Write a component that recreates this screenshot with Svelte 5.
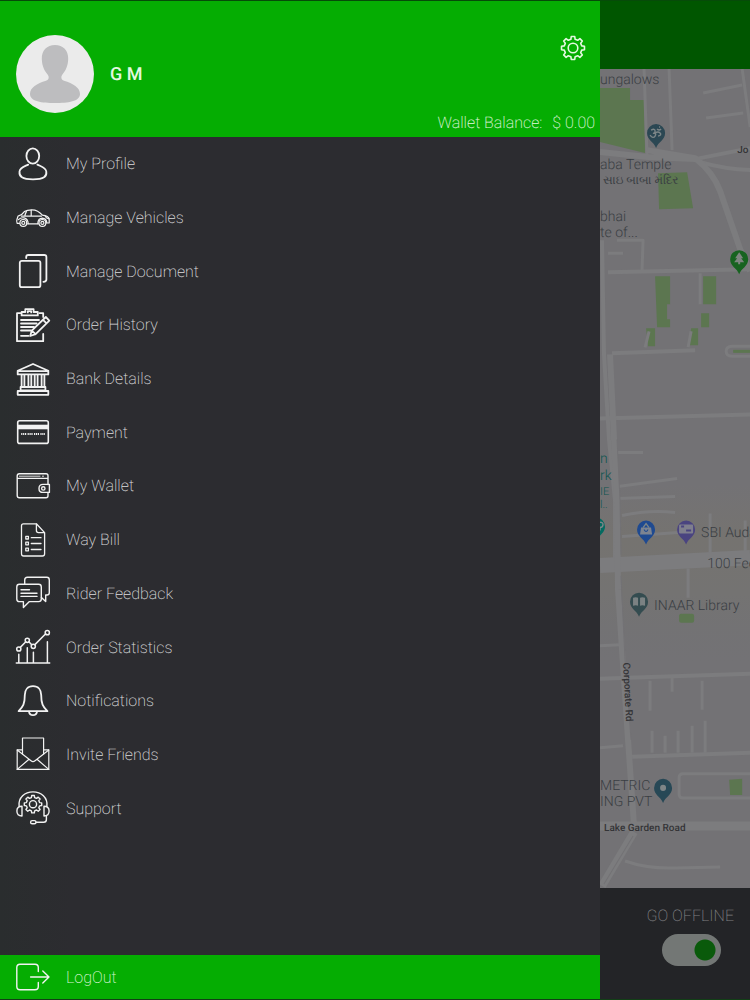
<script>
  let online = $state(true);

  const menu = [
    { id: "profile", label: "My Profile" },
    { id: "vehicles", label: "Manage Vehicles" },
    { id: "document", label: "Manage Document" },
    { id: "history", label: "Order History" },
    { id: "bank", label: "Bank Details" },
    { id: "payment", label: "Payment" },
    { id: "wallet", label: "My Wallet" },
    { id: "waybill", label: "Way Bill" },
    { id: "feedback", label: "Rider Feedback" },
    { id: "statistics", label: "Order Statistics" },
    { id: "notifications", label: "Notifications" },
    { id: "invite", label: "Invite Friends" },
    { id: "support", label: "Support" },
  ];

  const pins = [
    { x: 56, y: 64, color: "#2b4753", kind: "temple" },
    { x: 139, y: 190, color: "#176320", kind: "tree" },
    { x: -4, y: 457, color: "#046a60", kind: "park" },
    { x: 46, y: 460, color: "#1f4a90", kind: "shop" },
    { x: 86, y: 460, color: "#4a4480", kind: "bank" },
    { x: 39, y: 532, color: "#344c50", kind: "library" },
    { x: 63, y: 718, color: "#274856", kind: "place" },
  ];

  // Outline of a cog with eight teeth
  function gear(cx, cy, outer, inner) {
    const steps = [
      [-0.24, inner],
      [-0.15, outer],
      [0.15, outer],
      [0.24, inner],
    ];
    const points = [];
    for (let i = 0; i < 8; i++) {
      for (const [turn, r] of steps) {
        const a = (i * Math.PI) / 4 + turn;
        points.push(`${(cx + r * Math.cos(a)).toFixed(2)} ${(cy + r * Math.sin(a)).toFixed(2)}`);
      }
    }
    return `M${points.join("L")}Z`;
  }
</script>

{#snippet icon(id)}
  <svg class="icon" viewBox="0 0 34 34" aria-hidden="true">
    {#if id === "profile"}
      <g stroke-width="1.8">
        <ellipse cx="16.8" cy="9" rx="6.4" ry="7.6" />
        <path d="M12.2 17.6C8 19.6 4 20.4 3.5 24.5C3 29.5 6 32.3 17 32.3S31 29.5 30.3 24.5C29.8 20.4 25.5 19.6 21.4 17.6" />
      </g>
    {:else if id === "vehicles"}
      <g stroke-width="1.2">
        <path d="M3.4 22.4H1.2Q.2 20.5 1 18.2L2 15.2Q6 14.2 8.4 10.6Q11 8.8 16 8.8Q22 8.8 26.4 14.2Q32.5 15 33.2 18V22H30.6M11.4 22.8H22.4" />
        <path d="M5.5 15.2H25.4M8.8 15Q9.2 12.8 10.4 10.6M15.2 9V15M2.4 18.6Q4.6 16.4 8 16.8Q12 17.6 12.2 22.6M21.8 22.6Q22 17.4 26.4 17.2Q30.2 17.4 30.8 21.6M29.4 15.5Q30.4 17.6 33 17.8" />
        <circle cx="7.3" cy="21.9" r="3.4" />
        <circle cx="7.3" cy="21.9" r="1.5" />
        <circle cx="26.4" cy="21.9" r="3.4" />
        <circle cx="26.4" cy="21.9" r="1.5" />
      </g>
    {:else if id === "document"}
      <g stroke-width="1.8">
        <rect x="3.8" y="6.8" width="20.6" height="26.4" rx="2" />
        <path d="M10.2 4V3Q10.2 1 12.2 1H28.4Q30.4 1 30.4 3V25.4Q30.4 27.6 27.4 27.8" />
      </g>
    {:else if id === "history"}
      <g stroke-width="1.8">
        <path d="M5 5.2H1V33.2H27.2V26M23.5 5.2H27.2V9" />
        <path d="M5.6 7.4V4H9.3V1.2H17.6V4H21.8V7.4ZM11.8 4.4V3.2H15.2V4.4" />
        <path d="M5 12H23M5 15.5H20.6M5 19H18M5 22.5H15M5 27.8H12.5" />
        <path d="M14.2 28L15.8 22.6L29.8 9L33.3 12.6L19.6 26.2ZM15.8 22.6L19.6 26.2M27 11.8L30.6 15.4" />
      </g>
    {:else if id === "bank"}
      <g stroke-width="1.8">
        <path d="M1.7 8.8L17 2L32.3 8.8V12.4H1.7ZM2 9.2H32" />
        <path d="M5.6 13V24.5M8.4 13V24.5M12.4 13V24.5M15.3 13V24.5M18.7 13V24.5M21.6 13V24.5M25.6 13V24.5M28.4 13V24.5" />
        <path d="M4.6 25H29.4V28.4H4.6ZM1.7 29H32.3V32.8H1.7Z" />
      </g>
    {:else if id === "payment"}
      <g stroke-width="1.6">
        <rect x="1.7" y="5.8" width="30.6" height="22.6" rx="2" />
        <path d="M2 12H32" stroke-width="4.6" stroke-linecap="butt" />
        <path d="M5.2 19H29" stroke-width="1.8" stroke-linecap="butt" stroke-dasharray="1.2 .7 1.2 .7 1.2 1.4" />
      </g>
    {:else if id === "wallet"}
      <g stroke-width="1.4">
        <path d="M32 15.5V6.8Q32 4.8 30 4.8H3.4Q1.2 4.8 1.2 7V26.6Q1.2 28.8 3.4 28.8H30Q32 28.8 32 26.8V23.4M1.8 9.4H31.6" />
        <path d="M3.4 7.2H24M26.4 7.2H27.6" stroke-width=".9" />
        <path d="M33.4 15.4H27Q23 15.4 23 19.4T27 23.4H33.4Z" />
        <circle cx="27.3" cy="19.4" r="1.7" />
      </g>
    {:else if id === "waybill"}
      <g stroke-width="1.3">
        <path d="M20.4 .8H7.4Q5.5 .8 5.5 2.8V30.8Q5.5 33 7.6 33H26.4Q28.6 33 28.6 30.8V9.6L20.4 .8V7.6Q20.4 9.6 22.4 9.6H28.6" />
        <path d="M9.8 13.4H12.4V16H9.8ZM9.8 19.2H12.4V21.8H9.8ZM9.8 25.2H12.4V27.8H9.8Z" />
        <path d="M15.3 14.7H25M15.3 20.5H25M15.3 26.5H25" />
      </g>
    {:else if id === "feedback"}
      <g stroke-width="1.4">
        <path d="M3.4 8.3H22.6Q25.3 8.3 25.3 11V23Q25.3 25.6 22.6 25.6H13.4L7.4 31.6V25.6H3.4Q.8 25.6 .8 23V11Q.8 8.3 3.4 8.3Z" />
        <path d="M8.7 8V4Q8.7 1.3 11.4 1.3H30.8Q33.3 1.3 33.3 4V16.4Q33.3 19 30.8 19H29.7V25.6L25.4 21.4" />
        <path d="M5 13.7H13.5M5 17.2H21M5 20.4H21" />
      </g>
    {:else if id === "statistics"}
      <g stroke-width="1.5">
        <path d="M.3 33H33.7M2.8 32.5V24.3M11.3 32.5V17.7M17.4 32.5V22.3M31.4 32.5V11.7" />
        <path d="M4.3 17.4L9.8 11.8M12.9 11.8L15.7 14.8M18.9 14.6L29.7 3.8" />
        <circle cx="2.8" cy="19" r="2.1" />
        <circle cx="11.3" cy="10.3" r="2.1" />
        <circle cx="17.3" cy="16.3" r="2.1" />
        <circle cx="31.3" cy="2.7" r="2.1" />
      </g>
    {:else if id === "notifications"}
      <g stroke-width="1.8">
        <path d="M17 2.2C11.5 2.2 8.8 6 8.8 11C8.8 19.8 7.2 22.6 2.6 27.2H31.4C26.8 22.6 25.2 19.8 25.2 11C25.2 6 22.5 2.2 17 2.2Z" />
        <path d="M13 27.6Q13.5 31.2 17 31.2T21 27.6" />
      </g>
    {:else if id === "invite"}
      <g stroke-width="1.2">
        <path d="M6.5 12.8H1.2V32.4H32.8V12.8H27.6M6.5 17V1H27.6V17" />
        <path d="M1.2 13L15 23.8Q17 25.4 19 23.8L32.8 13M1.2 32.4L13 22.3M32.8 32.4L21 22.3" />
      </g>
    {:else if id === "support"}
      <g stroke-width="1.4">
        <path d="M3.1 15.4C2 6.5 9 .9 17 .9S32 6.5 30.9 15.4" />
        <path d="M6 15.2C2.4 15.2 .9 17 .9 20S2.4 25 6 25ZM28 15.2C31.6 15.2 33.1 17 33.1 20S31.6 25 28 25Z" />
        <path d="M30.4 25V28.4Q30.4 31.2 27.6 31.2H20" />
        <rect x="14.6" y="29.6" width="5.4" height="3.2" rx="1.6" />
        <path d={gear(17, 13.2, 8.8, 6.8)} />
        <circle cx="17" cy="13.2" r="3.6" />
      </g>
    {:else if id === "logout"}
      <g stroke-width="1.4">
        <path d="M22.3 11.6V7.4Q22.3 4.2 19 4.2H4Q.8 4.2 .8 7.4V26.6Q.8 29.8 4 29.8H19Q22.3 29.8 22.3 26.6V22.4" />
        <path d="M14.6 17H33M26.8 11L33 17L26.8 23" />
      </g>
    {/if}
  </svg>
{/snippet}

<div class="screen">
  <aside class="drawer">
    <header>
      <div class="account">
        <svg class="avatar" viewBox="0 0 78 78" role="img" aria-label="Profile picture">
          <circle cx="39" cy="39" r="39" fill="#ebebeb" />
          <path
            fill="#bdbdbf"
            d="M39 10C47 10 52.5 15.5 52.2 24C52 31 49.5 36 46.4 39.5C44.6 42 45.2 44.6 48 45.8C57 48.6 64 52.5 64 59C64 66.5 52 68 39 68S14 66.5 14 59C14 52.5 21 48.6 30 45.8C33 44.6 33.4 42 31.6 39.5C28.5 36 26 31 25.8 24C25.5 15.5 31 10 39 10Z"
          />
        </svg>
        <h1>G M</h1>
        <button class="settings" aria-label="Settings">
          <svg viewBox="0 0 26 26" aria-hidden="true">
            <path d={gear(13, 13, 11.6, 9)} />
            <circle cx="13" cy="13" r="4.8" />
          </svg>
        </button>
      </div>
      <p class="balance"><span>Wallet Balance:</span><span>$ 0.00</span></p>
    </header>

    <nav>
      {#each menu as item}
        <a href="#{item.id}">
          {@render icon(item.id)}
          <span>{item.label}</span>
        </a>
      {/each}
    </nav>

    <button class="logout">
      {@render icon("logout")}
      <span>LogOut</span>
    </button>
  </aside>

  <main>
    <div class="appbar"></div>
    <div class="map">
      <svg viewBox="0 0 150 818" preserveAspectRatio="xMinYMin slice" role="img" aria-label="Map">
        <defs>
          <linearGradient id="district" x1="0" y1="0" x2="0" y2="1">
            <stop offset="0" stop-color="#757370" stop-opacity="0" />
            <stop offset="0.3" stop-color="#757370" />
            <stop offset="0.6" stop-color="#747372" />
            <stop offset="1" stop-color="#727274" stop-opacity="0" />
          </linearGradient>
        </defs>
        <rect width="150" height="818" fill="#737275" />
        <rect y="415" width="150" height="180" fill="url(#district)" />

        <g fill="#5c7650">
          <path d="M0 19H30V31H44L45 84L0 73Z" />
          <path d="M58 104L87 103L93 139L59 140Z" />
          <path d="M55 207H70V235H67V250H70V258H57Z" />
          <path d="M46 259H55V277H48ZM103 207H116V235H103ZM101 244H109V258H101ZM91 259H98V276H89Z" />
          <rect x="79" y="544" width="15" height="9" rx="2" />
          <path d="M129 710L142 709V725H130Z" />
        </g>

        <g class="roads">
          <g stroke-width="3">
            <path d="M44 0L47 88M69 0L72 81M142 0L150 58M103 24L142 16M106 49L143 44" />
            <path d="M8 184H23M17 171H43L42 201M100 204V235M49 262L45 278M91 262L88 278" />
            <path d="M17 383H43M18 417L77 409M18 429L75 427M22 446Q50 440 75 443M22 467L78 463" />
            <path d="M110 444V486M145 451V486M88 499V528M0 576L20 575M0 678L23 676" />
            <path d="M50 611V641M72 608V622M102 611V640M52 661V683M65 666V683M78 661V683M92 656V683M105 651V683" />
            <path d="M150 704H83Q79 704 79 708V724Q79 728 83 728H150" />
            <path d="M150 277H132Q126 277 126 282T132 287H150M25 791Q48 799 75 798L120 797" />
          </g>
          <g stroke-width="4">
            <path d="M8 203L150 200M12 284L95 281M0 349L150 345M0 609L28 608L150 604M32 687L150 683" />
            <path d="M95 90L150 79M100 93Q125 100 150 101M2 171L4 285L9 370L15 431V490" />
          </g>
          <g stroke-width="6">
            <path d="M0 83L48 88L95 90M47 81L95 89Q113 103 120 122L140 180L150 202" />
            <path d="M0 756H150" stroke-width="9" />
            <path d="M0 496L150 488" stroke-width="15" />
            <path d="M10 285L14 370L17 431L18 520L22 580L28 670L34 756" />
            <path d="M34 762L2 816" stroke-width="8" />
          </g>
        </g>
        <path d="M17 370L20 431L21 485M21 506L25 590L31 670M33 766L4 814" fill="none" stroke="#737275" />
        <path d="M133 282H150" stroke="#5c7650" stroke-width="3" />

        <g class="places">
          <text x="0" y="15">ungalows</text>
          <text x="0" y="100">aba Temple</text>
          <text x="3" y="115" font-size="12">સાઇ બાબા મંદિર</text>
          <text x="0" y="152">bhai</text>
          <text x="0" y="168">te of...</text>
          <text x="101" y="467">SBI Auda</text>
          <text x="107" y="498">100 Fee</text>
          <text x="54" y="540">INAAR Library</text>
          <text x="0" y="720">METRIC</text>
          <text x="0" y="736">ING PVT</text>
          <g class="green">
            <text x="0" y="394">n</text>
            <text x="0" y="410">rk</text>
            <text x="0" y="425" font-size="11">IE</text>
            <text x="0" y="438" font-size="11">l..</text>
          </g>
        </g>
        <g class="streets">
          <text x="137" y="84">Jo</text>
          <text x="4" y="761">Lake Garden Road</text>
          <text x="23" y="593" transform="rotate(87 23 593)">Corporate Rd</text>
        </g>

        {#each pins as pin}
          <g transform="translate({pin.x} {pin.y})">
            <path fill={pin.color} d="M0 -9A9 9 0 0 1 9 0C9 7 2 9 0 15C-2 9 -9 7 -9 0A9 9 0 0 1 0 -9Z" />
            {#if pin.kind === "temple"}
              <path class="glyph" d="M-5 -3Q-1 -5 -1 -2T-3 0Q1 0 -1 3T-6 2M-1 0Q2 -2 4 0T2 3M1 -4Q3 -2 5 -4M3 -6H4" />
            {:else if pin.kind === "tree"}
              <path fill="#7e8580" d="M0 -7L4 -1H2L5 3H1V5H-1V3H-5L-2 -1H-4Z" />
            {:else if pin.kind === "park"}
              <path class="glyph" d="M3 -4Q7 -5 7 -2T4 1V4" />
            {:else if pin.kind === "shop"}
              <path fill="#7c8491" d="M-5 -2H5L6 5H-6Z" />
              <path class="glyph" d="M-3 -2L0 -6L3 -2" />
              <path d="M-2 0Q0 4 2 0" fill="none" stroke={pin.color} />
            {:else if pin.kind === "bank"}
              <rect x="-7" y="-5" width="14" height="9" rx="1" fill="#7f7f8d" />
              <path d="M-5 -3H-2M0 1H5" stroke={pin.color} stroke-width="2" />
            {:else if pin.kind === "library"}
              <path fill="#7b8283" d="M-6 -4Q-3 -5 -1 -4V4Q-3 3 -6 4ZM6 -4Q3 -5 1 -4V4Q3 3 6 4Z" />
            {:else}
              <circle r="3" fill="#7e8587" />
            {/if}
          </g>
        {/each}
      </svg>
    </div>

    <footer>
      <label for="online">GO OFFLINE</label>
      <input id="online" type="checkbox" role="switch" bind:checked={online} />
    </footer>
  </main>
</div>

<style>
  :global(body) {
    margin: 0;
    background: #2c2c30;
  }

  .screen {
    display: grid;
    grid-template-columns: 4fr 1fr;
    min-height: 100vh;
    box-sizing: border-box;
    border-top: 1px solid #064b09;
    border-bottom: 1px solid #123f16;
    font-family: Roboto, "Noto Sans", sans-serif;
    font-size: 16px;
    font-weight: 200;
    text-rendering: geometricPrecision;
  }

  .drawer {
    display: flex;
    flex-direction: column;
    background: linear-gradient(90deg, #2a2d2e, #2c2c30 12%);
  }

  header {
    padding: 34px 5px 4px 16px;
    background: #05ad02;
    color: #e4f8e0;
  }

  .account {
    display: flex;
    align-items: center;
    gap: 16px;
  }

  .avatar {
    width: 78px;
    height: 78px;
  }

  h1 {
    flex: 1;
    margin: 0;
    font-size: 18px;
    font-weight: 500;
  }

  button {
    border: 0;
    font: inherit;
    cursor: pointer;
  }

  .settings {
    align-self: flex-start;
    margin-right: 9px;
    padding: 0;
    background: none;
  }

  .settings svg {
    display: block;
    width: 26px;
    height: 26px;
    fill: none;
    stroke: #e4f8e0;
    stroke-width: 1.6;
    stroke-linejoin: round;
  }

  .balance {
    display: flex;
    justify-content: flex-end;
    gap: 10px;
    margin: 0;
    line-height: 20px;
  }

  nav {
    display: flex;
    flex: 1;
    flex-direction: column;
    padding-bottom: 120px;
  }

  nav a {
    display: flex;
    flex: 1;
    align-items: center;
    gap: 16px;
    padding: 0 16px;
    color: #dcdcde;
    text-decoration: none;
  }

  .icon {
    width: 34px;
    height: 34px;
    overflow: visible;
    fill: none;
    stroke: #f2f2f2;
    stroke-linejoin: round;
    stroke-linecap: round;
  }

  .logout {
    display: flex;
    align-items: center;
    gap: 16px;
    padding: 5px 16px;
    background: #05ad02;
    color: #d8f5d4;
  }

  main {
    display: flex;
    flex-direction: column;
    min-width: 0;
    background: #232427;
  }

  .appbar {
    height: 68px;
    background: #005600;
  }

  .map {
    flex: 1;
    min-height: 0;
    overflow: hidden;
  }

  .map svg {
    display: block;
    width: 100%;
    height: 100%;
  }

  .roads {
    fill: none;
    stroke: #7c7c7e;
    stroke-linejoin: round;
  }

  .places {
    fill: #3a3e43;
    font-size: 14px;
    font-weight: 300;
  }

  .green {
    fill: #0f5550;
  }

  .streets {
    fill: #343437;
    font-size: 10px;
    font-weight: 500;
  }

  .glyph {
    fill: none;
    stroke: #7c8587;
    stroke-width: 1.4;
  }

  footer {
    display: flex;
    flex-direction: column;
    align-items: flex-end;
    gap: 8px;
    padding: 18px 16px 33px;
    color: #808083;
  }

  footer label {
    line-height: 20px;
  }

  footer input {
    width: 59px;
    height: 32px;
    margin: 0 13px 0 0;
    appearance: none;
    border-radius: 16px;
    background: radial-gradient(circle at 16px 50%, #3d4a3e 11px, #767878 12px);
  }

  footer input:checked {
    background: radial-gradient(circle at 43px 50%, #0a5a0b 10px, #737775 11px);
  }
</style>
